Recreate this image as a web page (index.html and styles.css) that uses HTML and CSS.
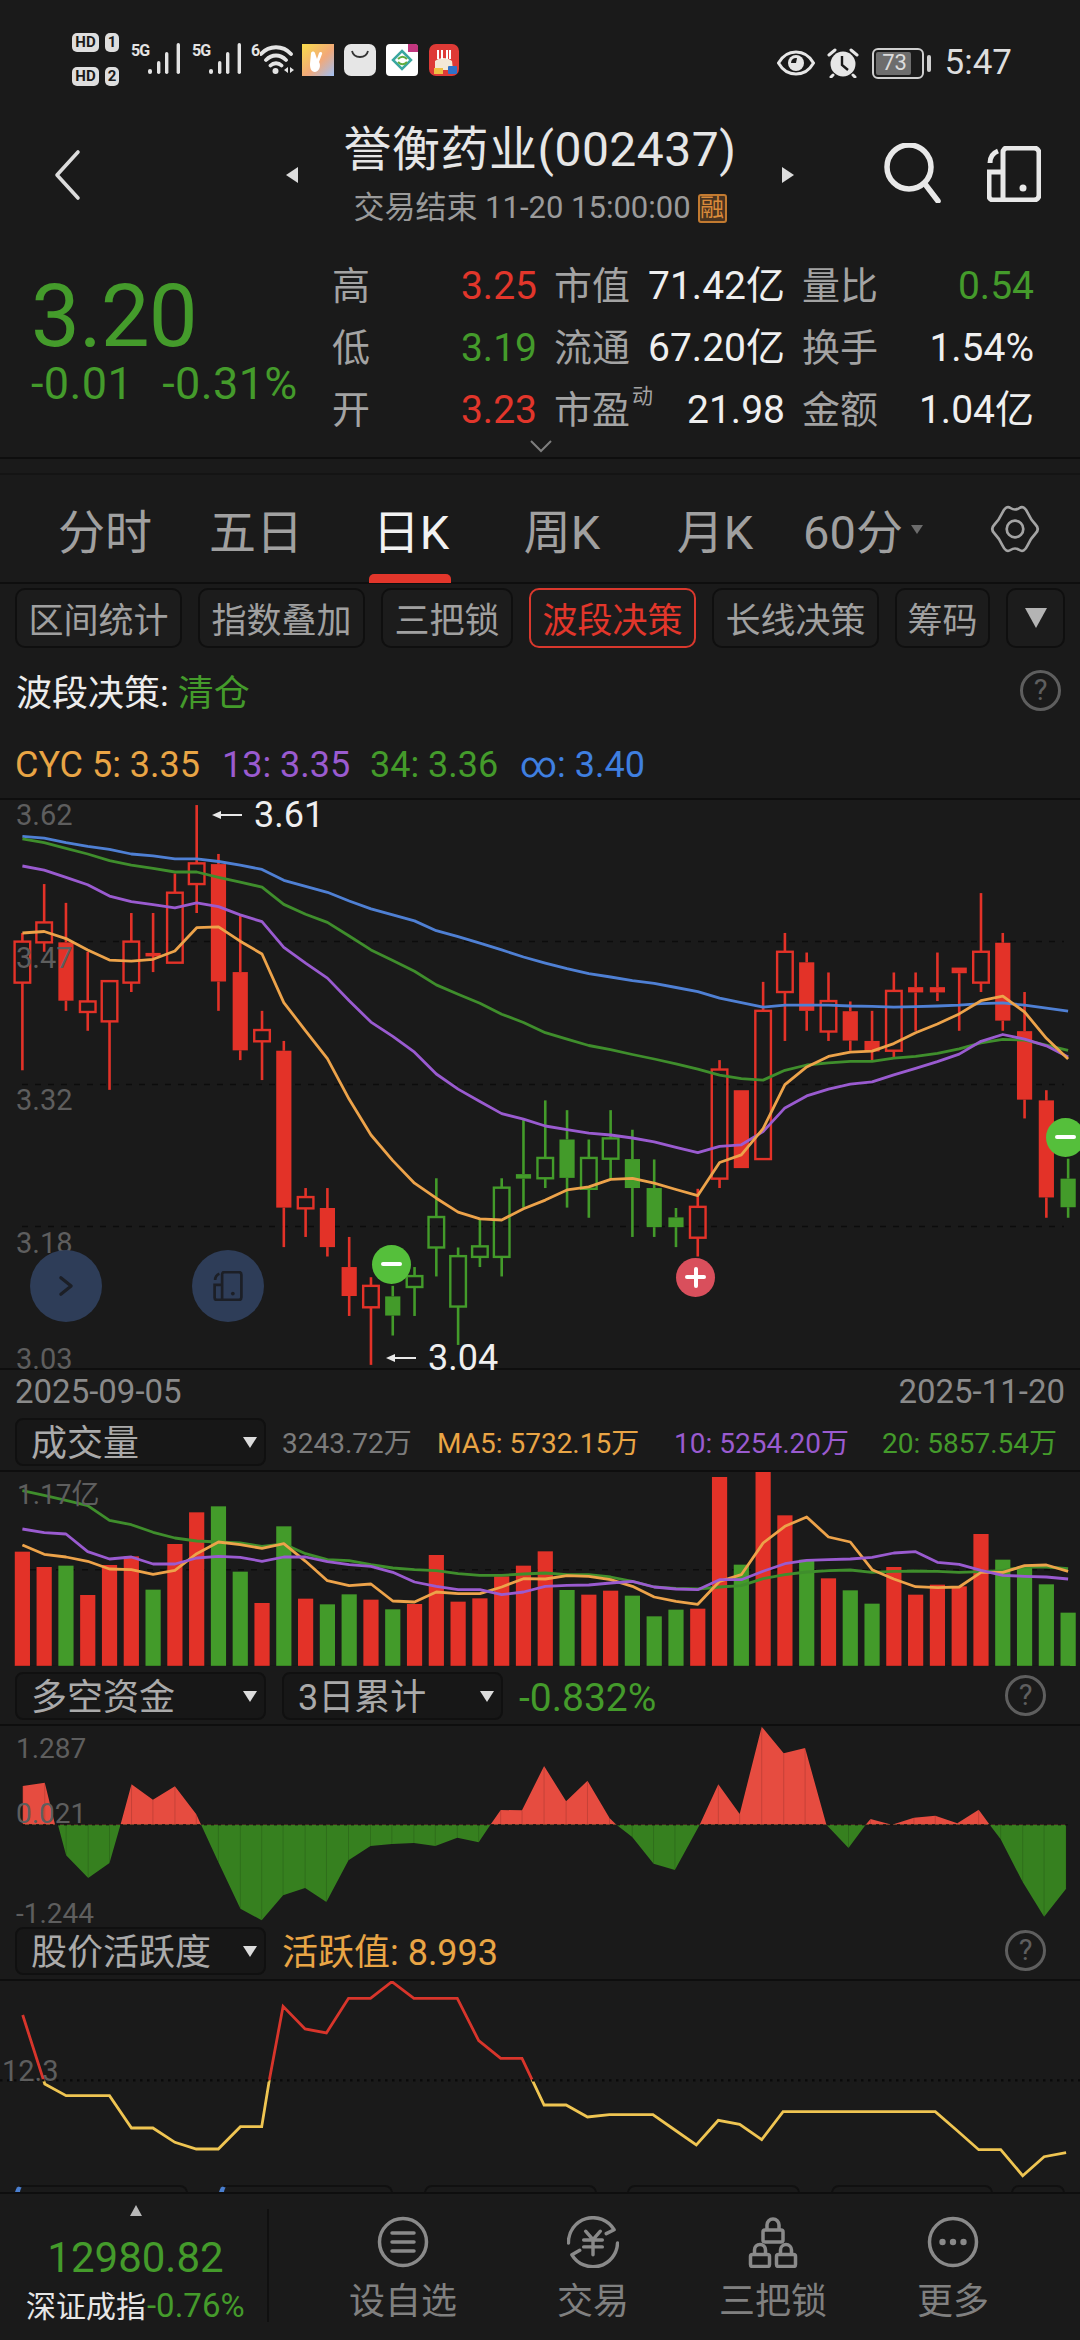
FILE: index.html
```html
<!DOCTYPE html>
<html lang="zh">
<head>
<meta charset="utf-8">
<title>誉衡药业(002437)</title>
<link rel="stylesheet" href="styles.css">
</head>
<body>
<div class="page">

  <div class="status">
    <div class="hd-stack">
      <div class="hd-row"><span class="hd-pill">HD</span><span class="hd-num">1</span></div>
      <div class="hd-row"><span class="hd-pill">HD</span><span class="hd-num">2</span></div>
    </div>
    <div class="sig"><span class="sig-label">5G</span>
      <svg class="sig-bars" viewBox="0 0 32 31"><rect x="0" y="26" width="4" height="5" rx="2"/><rect x="9" y="18" width="3.4" height="13" rx="1.7"/><rect x="17" y="9" width="3.4" height="22" rx="1.7"/><rect x="28.600" y="0" width="3.4" height="31" rx="1.7"/></svg>
    </div>
    <div class="sig"><span class="sig-label">5G</span>
      <svg class="sig-bars" viewBox="0 0 32 31"><rect x="0" y="26" width="4" height="5" rx="2"/><rect x="9" y="18" width="3.4" height="13" rx="1.7"/><rect x="17" y="9" width="3.4" height="22" rx="1.7"/><rect x="28.600" y="0" width="3.4" height="31" rx="1.7"/></svg>
    </div>
    <div class="sig wifi"><span class="sig-label six">6</span>
      <svg class="wifi-icon" viewBox="0 0 36 31"><path d="M1 11C9 2 23 2 31 11M6 17c6-6 14-6 20 0M10.500 22.500c3-3 8-3 11 0" fill="none" stroke="#e4e4e4" stroke-width="3.800" stroke-linecap="round"/><circle cx="15.500" cy="28" r="3" fill="#e4e4e4"/><path d="M28 24v6l-4-3zM30 24v6l4-3z" fill="#e4e4e4"/></svg>
    </div>
    <svg class="app app-first" viewBox="0 0 32 32"><defs><linearGradient id="g1" x1="0" y1="0" x2="1" y2="1"><stop offset="0" stop-color="#f8dc4a"/><stop offset=".55" stop-color="#f2a979"/><stop offset="1" stop-color="#9fc0f5"/></linearGradient></defs><rect width="32" height="32" fill="url(#g1)"/><path d="M9 9c1-2 3-2 4 0l2 6 2-6c1-2 4-1 3 1l-3 8c2 3 1 9-4 10-4 0-5-4-5-8z" fill="#fff"/></svg>
    <svg class="app app-gap" viewBox="0 0 32 32"><rect width="32" height="32" rx="7" fill="#e6e6e6"/><path d="M8 7c2 8 14 8 16 0" fill="none" stroke="#333" stroke-width="1.800"/></svg>
    <svg class="app app-gap" viewBox="0 0 32 32"><rect width="32" height="32" rx="4" fill="#fff"/><path d="M22 0h7a3 3 0 0 1 3 3v5h-10z" fill="#c2367f"/><path d="M16 7l9 9-9 9-9-9z" fill="none" stroke="#3aa7a0" stroke-width="2.500"/><path d="M12 15c3-3 6-3 9 0M12 18c3 3 6 3 9 0" fill="none" stroke="#62ad3f" stroke-width="2"/></svg>
    <svg class="app app-gap app-last" viewBox="0 0 30 32"><rect width="30" height="32" rx="7" fill="#de3a36"/><path d="M6 17c5-4 12-4 17 0l1 9H6z" fill="#f3e8d6"/><rect x="19" y="22" width="9" height="8" rx="1" fill="#2f72c9"/><rect x="5" y="24" width="9" height="6" fill="#eec044"/><path d="M9 6v9M13 6v9M18 6v9M21 6v9" stroke="#fff" stroke-width="2"/></svg>

    <div class="status-right">
      <svg class="eye" viewBox="0 0 38 26"><path d="M1.500 13C6 5 12 2 19 2s13 3 17.500 11C32 21 26 24 19 24S6 21 1.500 13z" fill="none" stroke="#e6e6e6" stroke-width="3"/><circle cx="19" cy="13" r="8" fill="#e6e6e6"/><path d="M14 13a5 5 0 0 1 6-5l-1 5z" fill="#1a1a1a"/></svg>
      <svg class="alarm" viewBox="0 0 32 30"><circle cx="16" cy="16" r="12.500" fill="#e6e6e6"/><path d="M15 8v9l6 5" fill="none" stroke="#1a1a1a" stroke-width="2.400"/><path d="M2 7l6-5M30 7l-6-5M6 27l-2 2M26 27l2 2" stroke="#e6e6e6" stroke-width="3" stroke-linecap="round"/></svg>
      <div class="battery"><div class="battery-fill"></div><span class="battery-text">73</span></div>
      <div class="battery-nub"></div>
      <span class="clock">5:47</span>
    </div>
  </div>

  <header class="header">
    <svg class="back" viewBox="0 0 28 52"><path d="M25 3L4 26l21 23" fill="none" stroke="#dcdcdc" stroke-width="3.600" stroke-linecap="round" stroke-linejoin="round"/></svg>
    <div class="tri-left"></div>
    <div class="title-box">
      <div class="title">誉衡药业(002437)</div>
      <div class="subtitle">交易结束 11-20 15:00:00<span class="rong">融</span></div>
    </div>
    <div class="tri-right"></div>
    <svg class="search" viewBox="0 0 60 60"><circle cx="27" cy="24" r="22" fill="none" stroke="#e8e8e8" stroke-width="5.500"/><path d="M43 41l13 17" stroke="#e8e8e8" stroke-width="5.500" stroke-linecap="round"/></svg>
    <svg class="split" viewBox="0 0 54 56"><path d="M15 54H6a4 4 0 0 1-4-4V26h13M16 6a4 4 0 0 1 4-4h27a5 5 0 0 1 5 5v42a5 5 0 0 1-5 5H16z" fill="none" stroke="#e8e8e8" stroke-width="5"/><circle cx="36" cy="42" r="3.500" fill="#e8e8e8"/><path d="M3 17c0-6 3-10 8-12" fill="none" stroke="#e8e8e8" stroke-width="5"/></svg>
  </header>

  <section class="quote">
    <div class="price-col">
      <div class="price">3.20</div>
      <div class="change"><span>-0.01</span><span>-0.31%</span></div>
    </div>
    <div class="stats">
      <div class="stat"><span class="lbl">高</span><span class="red">3.25</span></div>
      <div class="stat"><span class="lbl">市值</span><span class="val">71.42亿</span></div>
      <div class="stat"><span class="lbl">量比</span><span class="green">0.54</span></div>
      <div class="stat"><span class="lbl">低</span><span class="green">3.19</span></div>
      <div class="stat"><span class="lbl">流通</span><span class="val">67.20亿</span></div>
      <div class="stat"><span class="lbl">换手</span><span class="val">1.54%</span></div>
      <div class="stat"><span class="lbl">开</span><span class="red">3.23</span></div>
      <div class="stat"><span class="lbl">市盈<sup class="sup">动</sup></span><span class="val">21.98</span></div>
      <div class="stat"><span class="lbl">金额</span><span class="val">1.04亿</span></div>
    </div>
    <svg class="more-down" viewBox="0 0 22 14"><path d="M1 2l10 10L21 2" fill="none" stroke="#7e7e7e" stroke-width="2"/></svg>
  </section>
  <div class="band"></div>

  <nav class="tabs">
    <div class="tab">分时</div>
    <div class="tab">五日</div>
    <div class="tab tab-active">日K</div>
    <div class="tab">周K</div>
    <div class="tab">月K</div>
    <div class="tab">60分</div>
    <div class="tab-caret"></div>
    <svg class="gear" viewBox="-1 -1 50 50"><path d="M28.500 3Q33 0 36.500 7.500Q40 15 44.500 19.500Q49 24 44.500 28.500Q40 33 36.500 40.500Q33 48 28.500 45Q24 42 19.500 45Q15 48 11.500 40.500Q8 33 3.500 28.500Q-1 24 3.500 19.500Q8 15 11.500 7.500Q15 0 19.500 3Q24 6 28.500 3z" fill="none" stroke="#a4a4a4" stroke-width="2.700" stroke-linejoin="round"/><circle cx="24" cy="24" r="8.300" fill="none" stroke="#a4a4a4" stroke-width="2.700"/></svg>
  </nav>

  <div class="chips">
    <div class="chip chip-4">区间统计</div>
    <div class="chip chip-4">指数叠加</div>
    <div class="chip chip-3">三把锁</div>
    <div class="chip chip-4 chip-on">波段决策</div>
    <div class="chip chip-4">长线决策</div>
    <div class="chip chip-2">筹码</div>
    <div class="chip chip-1"><span class="chip-tri"></span></div>
  </div>

  <div class="decision">
    <span class="decision-text">波段决策: <span class="green">清仓</span></span>
    <span class="help">?</span>
  </div>

  <div class="cyc">
    <span class="c-orange">CYC 5: 3.35</span>
    <span class="c-purple">13: 3.35</span>
    <span class="c-green">34: 3.36</span>
    <span class="c-blue">∞: 3.40</span>
  </div>

  <section class="candle-pane">
    <svg id="candles" class="chart" width="1080" height="570"></svg>
    <span class="axis ax-a">3.62</span>
    <span class="axis ax-b">3.47</span>
    <span class="axis ax-c">3.32</span>
    <span class="axis ax-d">3.18</span>
    <span class="axis ax-e">3.03</span>
    <div class="hilo hilo-hi"><svg class="arrow" viewBox="0 0 30 10"><path d="M0 5l9-4v3h21v2H9v3z" fill="#e8e8e8"/></svg><span>3.61</span></div>
    <div class="hilo hilo-lo"><svg class="arrow" viewBox="0 0 30 10"><path d="M0 5l9-4v3h21v2H9v3z" fill="#e8e8e8"/></svg><span>3.04</span></div>
    <div class="fab fab-a"><svg class="fab-icon" viewBox="0 0 28 32"><path d="M6 3l16 13L6 29" fill="none" stroke="#1c1f26" stroke-width="5" stroke-linecap="round" stroke-linejoin="round"/></svg></div>
    <div class="fab fab-b"><svg class="fab-icon2" viewBox="0 0 54 56"><path d="M15 54H6a4 4 0 0 1-4-4V26h13M16 6a4 4 0 0 1 4-4h27a5 5 0 0 1 5 5v42a5 5 0 0 1-5 5H16z" fill="none" stroke="#1c1f26" stroke-width="5"/><circle cx="36" cy="42" r="3.500" fill="#1c1f26"/><path d="M3 17c0-6 3-10 8-12" fill="none" stroke="#1c1f26" stroke-width="5"/></svg></div>
    <div class="mark mark-minus mark-a"></div>
    <div class="mark mark-minus mark-c"></div>
    <div class="mark mark-plus mark-b"></div>
  </section>

  <div class="dates"><span>2025-09-05</span><span>2025-11-20</span></div>

  <div class="ind-head vol-head">
    <div class="select select-wide"><span>成交量</span><i class="select-tri"></i></div>
    <span class="vol-val">3243.72万</span>
    <span class="c-orange vol-a">MA5: 5732.15万</span>
    <span class="c-purple vol-b">10: 5254.20万</span>
    <span class="c-green vol-c">20: 5857.54万</span>
  </div>
  <section class="vol-pane">
    <svg id="volume" class="chart" width="1080" height="194"></svg>
    <span class="axis ax-vol">1.17亿</span>
  </section>

  <div class="ind-head money-head">
    <div class="select select-wide"><span>多空资金</span><i class="select-tri"></i></div>
    <div class="select select-mid"><span>3日累计</span><i class="select-tri"></i></div>
    <span class="ind-val c-green">-0.832%</span>
    <span class="help help-r">?</span>
  </div>
  <section class="money-pane">
    <svg id="money" class="chart" width="1080" height="195"></svg>
    <span class="axis ax-m1">1.287</span>
    <span class="axis ax-m2">0.021</span>
    <span class="axis ax-m3">-1.244</span>
  </section>

  <div class="ind-head act-head">
    <div class="select select-wide"><span>股价活跃度</span><i class="select-tri"></i></div>
    <span class="ind-val c-orange">活跃值: 8.993</span>
    <span class="help help-r">?</span>
  </div>
  <section class="act-pane">
    <svg id="activity" class="chart" width="1080" height="214"></svg>
    <span class="axis ax-act">12.3</span>
    <div class="peek"><i class="peek-tab peek-a"></i><i class="peek-tab peek-b"></i><i class="peek-tab peek-c"></i><i class="peek-tab peek-d"></i><i class="peek-tab peek-e"></i><i class="peek-tab peek-f"></i></div>
  </section>

  <footer class="bottom">
    <div class="index">
      <div class="index-caret"></div>
      <div class="index-num">12980.82</div>
      <div class="index-row"><span class="index-name">深证成指</span><span class="green index-pct">-0.76%</span></div>
    </div>
    <div class="nav">
      <div class="nav-item">
        <svg class="nav-icon" viewBox="0 0 52 52"><circle cx="26" cy="26" r="23.500" fill="none" stroke="#8a8a8a" stroke-width="3.500"/><path d="M15 17h22M15 26h22M15 35h22" stroke="#8a8a8a" stroke-width="3.500" stroke-linecap="round"/></svg>
        <span>设自选</span>
      </div>
      <div class="nav-item">
        <svg class="nav-icon" viewBox="0 0 53 52"><path d="M1.500 27A25 25 0 0 1 48 13.500L40 17.500M51.500 27A25 25 0 0 1 5 39L13 34.500" fill="none" stroke="#8a8a8a" stroke-width="3.500" stroke-linecap="round" stroke-linejoin="round"/><path d="M19 15l7.500 8.500L34 15M17 24h19M17 31h19M26.500 24v15" fill="none" stroke="#8a8a8a" stroke-width="3.500" stroke-linecap="round" stroke-linejoin="round"/></svg>
        <span>交易</span>
      </div>
      <div class="nav-item">
        <svg class="nav-icon" viewBox="0 0 52 52"><g fill="none" stroke="#8a8a8a" stroke-width="3.500" stroke-linejoin="round"><rect x="16" y="14" width="20" height="12" rx="2"/><path d="M20 14V9a6 6 0 0 1 12 0v5"/><rect x="3.500" y="38.500" width="19" height="12" rx="2"/><path d="M7.500 38.500V34a5.500 5.500 0 0 1 11 0v4.500"/><rect x="29.500" y="38.500" width="19" height="12" rx="2"/><path d="M33.500 38.500V34a5.500 5.500 0 0 1 11 0v4.500"/></g></svg>
        <span>三把锁</span>
      </div>
      <div class="nav-item">
        <svg class="nav-icon" viewBox="0 0 52 52"><circle cx="26" cy="26" r="23.500" fill="none" stroke="#8a8a8a" stroke-width="3.500"/><circle cx="15.500" cy="26" r="3.200" fill="#8a8a8a"/><circle cx="26" cy="26" r="3.200" fill="#8a8a8a"/><circle cx="36.500" cy="26" r="3.200" fill="#8a8a8a"/></svg>
        <span>更多</span>
      </div>
    </div>
  </footer>
</div>
<script src="charts.js"></script>
</body>
</html>
```

FILE: styles.css
```css
* { box-sizing: border-box; }
html, body { margin: 0; padding: 0; background: #1a1a1a; }
body { font-family: Roboto, "Noto Sans CJK SC", sans-serif; color: #e8e8e8; }
.page { width: 1080px; height: 2340px; overflow: hidden; position: relative; background: #1a1a1a; }
.red { color: #e2362b; }
.green { color: #449b2b; }
.c-orange { color: #e9a545; }
.c-purple { color: #9a5bd0; }
.c-green { color: #449b2b; }
.c-blue { color: #3f7fe0; }

/* status bar */
.status { height: 100px; display: flex; align-items: flex-start; padding: 33px 68px 0 72px; }
.hd-stack { display: flex; flex-direction: column; gap: 15px; width: 59px; }
.hd-row { display: flex; gap: 6px; }
.hd-pill, .hd-num { height: 19px; background: #dedede; color: #1a1a1a; border-radius: 5px; font-size: 15px; font-weight: 700; line-height: 19px; text-align: center; }
.hd-pill { width: 27px; }
.hd-num { width: 14px; }
.sig { display: flex; align-items: flex-start; margin-top: 10px; }
.sig-label { font-size: 16px; font-weight: 700; line-height: 16px; letter-spacing: -1px; color: #e4e4e4; width: 17px; }
.sig-bars { width: 32px; height: 31px; fill: #e4e4e4; margin-right: 12px; }
.six { width: 9px; letter-spacing: 0; }
.wifi { margin-left: -2px; }
.wifi-icon { width: 36px; height: 31px; }
.app { width: 32px; height: 32px; margin-top: 11px; flex: none; }
.app-first { margin-left: 6px; }
.app-gap { margin-left: 10px; }
.app-last { width: 30px; margin-left: 11px; }
.status-right { margin-left: auto; display: flex; align-items: center; height: 42px; margin-top: 9px; }
.eye { width: 38px; height: 26px; }
.alarm { width: 32px; height: 30px; margin-left: 12px; }
.battery { position: relative; width: 52px; height: 31px; margin-left: 13px; border: 2.5px solid #cfcfcf; border-radius: 6px; }
.battery-fill { position: absolute; left: 2px; top: 2px; bottom: 2px; width: 35px; background: #6d6d6d; border-radius: 2px; }
.battery-text { position: absolute; inset: 0; font-size: 22px; line-height: 26px; text-align: center; color: #dcdcdc; padding-right: 6px; }
.battery-nub { width: 4px; height: 17px; background: #cfcfcf; border-radius: 2px; margin-left: 3px; }
.clock { font-size: 35px; line-height: 42px; color: #dedede; margin-left: 14px; }

/* header */
.header { height: 140px; display: flex; align-items: flex-start; position: relative; padding-left: 53px; }
.back { width: 28px; height: 52px; margin-top: 49px; flex: none; }
.tri-left { margin-left: 205px; margin-top: 67px; width: 0; height: 0; border-top: 8px solid transparent; border-bottom: 8px solid transparent; border-right: 12px solid #dcdcdc; }
.tri-right { margin-top: 67px; width: 0; height: 0; border-top: 8px solid transparent; border-bottom: 8px solid transparent; border-left: 12px solid #dcdcdc; }
.title-box { width: 484px; display: flex; flex-direction: column; align-items: center; }
.title { font-size: 48px; line-height: 56px; margin-top: 22px; color: #e6e6e6; letter-spacing: 0.5px; white-space: nowrap; }
.subtitle { font-size: 31px; line-height: 32px; margin-top: 14px; color: #9a9a9a; white-space: nowrap; display: flex; align-items: center; }
.rong { width: 29px; height: 29px; margin-left: 7px; border: 2px solid #c27a30; background: #4a3420; border-radius: 3px; color: #d98a3a; font-size: 24px; line-height: 25px; text-align: center; }
.search { width: 60px; height: 60px; margin-left: 88px; margin-top: 43px; flex: none; }
.split { width: 54px; height: 56px; margin-left: 45px; margin-top: 46px; flex: none; }

/* quote */
.quote { height: 219px; display: flex; position: relative; border-bottom: 2px solid #0e0e0e; }
.price-col { width: 332px; padding-left: 31px; }
.price { font-size: 87px; line-height: 86px; color: #449b2b; margin-top: 33px; letter-spacing: -1px; }
.change { display: flex; gap: 29px; font-size: 45px; line-height: 46px; letter-spacing: 0.4px; color: #449b2b; margin-top: 2px; white-space: nowrap; }
.stats { display: grid; grid-template-columns: 205px 231px 232px; grid-auto-rows: 62.300px; column-gap: 17px; padding-top: 14.500px; font-size: 39px; line-height: 62px; }
.stat { display: flex; justify-content: space-between; white-space: nowrap; }
.lbl { color: #a3a3a3; font-size: 38px; position: relative; }
.val { color: #efefef; }
.sup { position: absolute; font-size: 21px; line-height: 21px; top: 7px; margin-left: 2px; }
.more-down { position: absolute; left: 530px; top: 199px; width: 22px; height: 14px; }
.band { height: 16px; border-bottom: 2px solid #141414; }

/* tabs */
.tabs { height: 109px; display: grid; grid-template-columns: 150px 152px 158px 144px 162px 114px 36px auto; padding-left: 30px; border-bottom: 2px solid #0e0e0e; position: relative; }
.tab { font-size: 47px; line-height: 60px; padding-top: 28px; text-align: center; color: #a0a0a0; white-space: nowrap; }
.tab-active { color: #f2f2f2; position: relative; height: 107px; }
.tab-active::after { content: ""; position: absolute; left: 37px; top: 99px; width: 82px; height: 9px; border-radius: 5px 5px 0 0; background: #e2362b; }
.tab-caret { margin-top: 50px; margin-left: 1px; width: 0; height: 0; border-left: 6px solid transparent; border-right: 6px solid transparent; border-top: 9px solid #6c6c6c; }
.gear { width: 50px; height: 50px; margin-top: 29px; margin-left: 44px; }

/* chips */
.chips { display: flex; gap: 16px; padding: 4px 0 0 15px; height: 67px; }
.chip { height: 60px; border: 2px solid #0f0f0f; border-radius: 10px; background: #1c1c1c; color: #a0a0a0; font-size: 35px; line-height: 54px; padding-top: 5px; text-align: center; white-space: nowrap; flex: none; }
.chip-4 { width: 167px; }
.chip-3 { width: 132px; }
.chip-2 { width: 95px; }
.chip-1 { width: 59px; display: flex; align-items: center; justify-content: center; padding-top: 0; }
.chip-on { border-color: #d9382d; color: #e2362b; }
.chip-tri { width: 0; height: 0; border-left: 11px solid transparent; border-right: 11px solid transparent; border-top: 20px solid #b4b4b4; }

.decision { height: 78px; display: flex; align-items: center; justify-content: space-between; padding: 0 19px 0 16px; }
.decision-text { font-size: 36px; color: #ececec; }
.help { width: 41px; height: 41px; border: 3px solid #5e5e5e; border-radius: 50%; color: #5e5e5e; font-size: 29px; line-height: 35px; text-align: center; flex: none; }
.help-r { position: absolute; left: 1005px; top: 9px; }

.cyc { height: 71px; border-bottom: 2px solid #0e0e0e; display: flex; font-size: 36px; line-height: 44px; padding: 14px 0 0 15px; white-space: nowrap; }
.cyc span { flex: none; }
.cyc span:nth-child(1) { width: 207px; }
.cyc span:nth-child(2) { width: 148px; }
.cyc span:nth-child(3) { width: 150px; }

/* charts */
.chart { display: block; position: absolute; left: 0; top: 0; }
.candle-pane { height: 570px; position: relative; border-bottom: 2px solid #0e0e0e; }
.axis { position: absolute; left: 16px; font-size: 29px; line-height: 29px; color: #5e5e5e; white-space: nowrap; }
.ax-a { top: 1px; }
.ax-b { top: 144px; }
.ax-c { top: 286px; }
.ax-d { top: 429px; }
.ax-e { top: 545px; }
.hilo { position: absolute; display: flex; align-items: center; gap: 12px; font-size: 36px; line-height: 36px; color: #efefef; }
.hilo-hi { left: 212px; top: -3px; }
.hilo-lo { left: 386px; top: 540px; }
.arrow { width: 30px; height: 10px; }
.fab { position: absolute; top: 450px; width: 72px; height: 72px; border-radius: 50%; background: #2e3d58; display: flex; align-items: center; justify-content: center; }
.fab-a { left: 30px; }
.fab-b { left: 192px; }
.fab-icon { width: 18px; height: 26px; }
.fab-icon2 { width: 32px; height: 30px; }
.mark { position: absolute; width: 39px; height: 39px; border-radius: 50%; }
.mark::before { content: ""; position: absolute; left: 9px; top: 17px; width: 21px; height: 4px; background: #fff; border-radius: 2px; }
.mark-minus { background: #55bf3b; }
.mark-plus { background: #d94f5c; }
.mark-plus::after { content: ""; position: absolute; left: 17.500px; top: 9px; width: 4px; height: 21px; background: #fff; border-radius: 2px; }
.mark-a { left: 372px; top: 445px; }
.mark-b { left: 676px; top: 458px; }
.mark-c { left: 1046px; top: 318px; }

.dates { height: 48px; display: flex; justify-content: space-between; padding: 5px 15px 0; font-size: 33px; line-height: 34px; color: #8a8a8a; }

.ind-head { display: flex; align-items: flex-start; white-space: nowrap; position: relative; }
.vol-head { height: 54px; border-bottom: 2px solid #0e0e0e; padding-left: 15px; }
.money-head { height: 60px; padding: 6px 0 0 15px; border-bottom: 2px solid #0e0e0e; }
.act-head { height: 60px; padding: 6px 0 0 15px; border-bottom: 2px solid #0e0e0e; }
.select { height: 48px; border: 2px solid #101010; border-radius: 8px; background: #171717; color: #aaa; font-size: 36px; line-height: 48px; padding-left: 14px; position: relative; flex: none; }
.select-wide { width: 251px; }
.select-mid { width: 221px; margin-left: 16px; }
.select-tri { position: absolute; right: 7px; top: 17px; width: 0; height: 0; border-left: 7px solid transparent; border-right: 7px solid transparent; border-top: 11px solid #dcdcdc; }
.vol-val { font-size: 28px; line-height: 52px; color: #7c7c7c; margin-left: 16px; width: 155px; }
.vol-a, .vol-b, .vol-c { font-size: 28px; line-height: 52px; }
.vol-a { width: 237px; }
.vol-b { width: 208px; }
.ind-val { font-size: 39px; line-height: 53px; margin-left: 16px; }
.act-head .ind-val { font-size: 36px; }

.vol-pane { height: 194px; position: relative; }
.ax-vol { top: 8px; left: 17px; font-size: 28px; }
.money-pane { height: 195px; position: relative; border-bottom: 0; }
.ax-m1 { top: 8px; font-size: 28px; }
.ax-m2 { top: 73px; font-size: 28px; }
.ax-m3 { top: 173px; font-size: 28px; }
.act-pane { height: 213px; position: relative; overflow: hidden; border-bottom: 2px solid #0e0e0e; }
.ax-act { top: 76px; left: 2px; }
.peek { position: absolute; left: 0; top: 204px; width: 1080px; height: 8px; display: block; }
.peek-tab { position: absolute; top: 0; height: 20px; border: 2px solid #101010; border-radius: 8px; }
.peek-a, .peek-b { border-left: 5px solid #4a7fd0; }
.peek-a { left: 15px; width: 173px; }
.peek-b { left: 219px; width: 174px; }
.peek-c { left: 424px; width: 173px; }
.peek-d { left: 627px; width: 173px; }
.peek-e { left: 831px; width: 162px; }
.peek-f { left: 1011px; width: 54px; }

/* bottom bar */
.bottom { height: 144px; display: flex; padding-top: 15px; }
.index { width: 269px; height: 113px; border-right: 2px solid #101010; position: relative; text-align: center; padding-left: 4px; }
.index-caret { width: 0; height: 0; margin: -4px auto 0; border-left: 6px solid transparent; border-right: 6px solid transparent; border-bottom: 11px solid #b8b8b8; }
.index-num { font-size: 42px; line-height: 48px; color: #449b2b; margin-top: 18px; }
.index-row { display: flex; align-items: baseline; margin-top: 4px; padding-left: 22px; font-size: 30px; line-height: 40px; white-space: nowrap; }
.index-name { color: #e6e6e6; }
.index-pct { font-size: 33px; margin-left: 1px; }
.nav { flex: 1; position: relative; display: grid; grid-template-columns: 190px 190px 170px 190px; padding-left: 39px; }
.nav-item { display: flex; flex-direction: column; align-items: center; color: #808080; font-size: 36px; line-height: 44px; white-space: nowrap; }
.nav-item span { margin-top: 12px; }
.nav-icon { width: 52px; height: 52px; margin-top: 7px; }
```

FILE: charts.js
```js
// Chart data is kept in reference sampling units and scaled to pixels below.
var NS = 'http://www.w3.org/2000/svg';
var RED = '#e33228', GREEN = '#439b2a';
var STEP = 63.3, X0 = 65;
var LINE = 2.8;

function add(svg, tag, attrs) {
  var e = document.createElementNS(NS, tag);
  for (var k in attrs) e.setAttribute(k, attrs[k]);
  svg.appendChild(e);
  return e;
}
function cx(i) { return (X0 + i * STEP * 0.9995) / 2.904; }

/* ------ candle chart ------ */
var C = [
 [380,745,403,512,'r'],[250,430,352,405,'r'],[300,587,405,560,'R'],[430,640,562,590,'r'],[507,797,508,615,'r'],
 [327,537,403,512,'r'],[327,484,433,440,'R'],[222,460,273,459,'r'],[40,327,195,250,'r'],[170,587,197,509,'R'],
 [335,718,484,692,'R'],[587,771,638,668,'r'],[667,1215,693,1110,'R'],[1058,1188,1082,1112,'r'],[1058,1240,1111,1215,'R'],
 [1188,1398,1268,1345,'R'],[1295,1528,1318,1375,'r'],[1318,1450,1346,1397,'G'],[1268,1398,1292,1321,'g'],[1032,1293,1135,1216,'g'],
 [1216,1475,1239,1373,'g'],[1140,1268,1213,1241,'g'],[1032,1293,1057,1241,'g'],[875,1110,1021,1033,'G'],[825,1058,978,1032,'g'],
 [851,1110,929,1031,'G'],[929,1137,978,1060,'g'],[851,1033,926,980,'g'],[903,1188,981,1058,'G'],[982,1188,1058,1162,'G'],
 [1111,1215,1136,1162,'G'],[1060,1240,1108,1190,'r'],[718,1058,743,1033,'r'],[798,1005,798,1005,'R'],[510,980,587,981,'r'],
 [380,667,430,537,'r'],[432,640,458,587,'R'],[485,667,561,642,'r'],[562,693,588,666,'R'],[587,718,667,695,'R'],
 [485,710,534,693,'r'],[485,640,524,538,'R'],[432,561,524,538,'R'],[472,640,472,487,'R'],[274,537,430,512,'r'],
 [380,640,406,613,'R'],[537,873,641,823,'R'],[798,1137,825,1083,'R'],[980,1137,1033,1109,'G']
];
var BLUE = [123,128,140,150,158,170,175,183,183,190,200,211,240,256,272,295,316,332,348,374,390,407,425,444,460,475,488,497,507,514,525,536,553,565,577,572,572,572,574,575,577,576,574,572,568,566,572,580,588];
var LGREEN = [130,140,155,170,188,200,208,218,218,232,245,258,304,330,352,388,425,453,482,518,543,567,596,618,645,662,679,690,703,715,728,742,758,767,771,745,731,725,721,721,713,708,700,688,672,663,665,678,692];
var PURPLE = [202,213,232,252,282,297,305,313,300,310,332,350,418,460,500,560,617,655,697,755,795,828,860,875,893,903,912,917,925,935,950,964,947,943,908,845,813,795,782,776,757,740,722,702,668,650,662,680,710];
var ORANGE = [380,376,395,425,452,455,450,428,366,364,402,436,565,640,714,822,917,985,1045,1085,1122,1140,1143,1113,1090,1063,1055,1035,1032,1045,1062,1078,990,970,900,783,736,708,697,694,674,645,622,595,560,548,590,660,715];

function cy(z) { return z / 2.658 - 10; }

(function () {
  var svg = document.getElementById('candles');
  [403, 783, 1160].forEach(function (z) {
    add(svg, 'line', { x1: 22, x2: 1064, y1: cy(z), y2: cy(z), stroke: '#0c0c0c', 'stroke-width': 1.5, 'stroke-dasharray': '6 7' });
  });
  C.forEach(function (c, i) {
    var x = cx(i), col = (c[4] === 'r' || c[4] === 'R') ? RED : GREEN;
    var hollow = c[4] === 'r' || c[4] === 'g';
    if (c[2] > c[0]) add(svg, 'line', { x1: x, x2: x, y1: cy(c[0]), y2: cy(c[2]), stroke: col, 'stroke-width': 2.6 });
    if (c[1] > c[3]) add(svg, 'line', { x1: x, x2: x, y1: cy(c[3]), y2: cy(c[1]), stroke: col, 'stroke-width': 2.6 });
    if (hollow) {
      add(svg, 'rect', { x: x - 7.8, y: cy(c[2]), width: 15.6, height: cy(c[3]) - cy(c[2]), fill: 'none', stroke: col, 'stroke-width': 2.4 });
    } else if (c[4] === 'R' && i === 33) {
      add(svg, 'rect', { x: x - 7.6, y: cy(798), width: 15.2, height: cy(1005) - cy(798), fill: col });
    } else {
      add(svg, 'rect', { x: x - 7.6, y: cy(c[2]), width: 15.2, height: Math.max(cy(c[3]) - cy(c[2]), 3.5), fill: col });
    }
  });
  var lines = [[BLUE, '#4f80d4'], [LGREEN, '#3f8e2c'], [PURPLE, '#9a5bd0'], [ORANGE, '#eda34a']];
  lines.forEach(function (l) {
    add(svg, 'polyline', {
      points: l[0].map(function (z, i) { return cx(i).toFixed(1) + ',' + cy(z).toFixed(1); }).join(' '),
      fill: 'none', stroke: l[1], 'stroke-width': LINE, 'stroke-linejoin': 'round'
    });
  });
})();

/* ------ volume ------ */
var V = [[516,'R'],[562,'R'],[558,'G'],[646,'R'],[556,'R'],[530,'R'],[630,'G'],[493,'R'],[398,'R'],[380,'G'],[576,'G'],[670,'R'],[440,'G'],[657,'R'],[674,'G'],[644,'G'],[660,'R'],[689,'G'],[673,'R'],[526,'R'],[666,'R'],[656,'R'],[590,'R'],[558,'R'],[515,'R'],[631,'G'],[645,'R'],[633,'R'],[648,'G'],[710,'G'],[690,'G'],[687,'R'],[292,'R'],[555,'G'],[276,'R'],[407,'R'],[540,'G'],[596,'R'],[632,'G'],[672,'G'],[562,'R'],[645,'R'],[615,'R'],[620,'R'],[463,'R'],[540,'G'],[565,'G'],[614,'G'],[699,'G']];
var VG = [333,347,362,378,422,435,458,475,484,487,490,500,493,522,540,543,555,565,570,573,582,587,587,583,580,585,585,592,605,622,626,628,622,618,597,585,577,573,571,578,575,574,575,578,576,572,562,562,567];
var VP = [448,459,463,516,538,532,553,553,535,530,533,545,532,532,546,555,560,578,607,620,630,630,645,637,620,617,616,610,605,622,628,630,600,600,575,552,542,540,538,533,520,516,548,554,572,587,590,592,598];
var VO = [496,524,532,545,568,570,584,572,522,487,495,506,492,545,603,618,613,664,667,637,642,642,622,597,598,588,590,600,620,652,665,674,605,585,490,440,412,472,487,570,598,621,624,622,578,578,558,556,575];

(function () {
  var svg = document.getElementById('volume');
  function vy(z) { return (z - 277) / 3; }
  add(svg, 'line', { x1: 30, x2: 1064, y1: vy(570), y2: vy(570), stroke: '#0c0c0c', 'stroke-width': 1.5, 'stroke-dasharray': '6 7' });
  V.forEach(function (v, i) {
    add(svg, 'rect', { x: cx(i) - 7.6, y: vy(v[0]), width: 15.2, height: vy(860) - vy(v[0]), fill: v[1] === 'R' ? RED : GREEN });
  });
  [[VG, '#3f8e2c'], [VO, '#eda34a'], [VP, '#9a5bd0']].forEach(function (l) {
    add(svg, 'polyline', {
      points: l[0].map(function (z, i) { return cx(i).toFixed(1) + ',' + vy(z).toFixed(1); }).join(' '),
      fill: 'none', stroke: l[1], 'stroke-width': LINE, 'stroke-linejoin': 'round'
    });
  });
  add(svg, 'line', { x1: 15, x2: 1070, y1: vy(860), y2: vy(860), stroke: '#0e0e0e', 'stroke-width': 1 });
})();

/* ------ long/short money area ------ */
var M = [[33,352],[65,342],[80,468],[84,468],[96,560],[128,628],[159,583],[175,468],[191,347],[222,393],[254,353],[285,437],[292,468],[317,580],[349,720],[380,755],[411,680],[443,658],[474,700],[506,575],[538,532],[569,526],[601,523],[632,532],[664,507],[695,521],[712,468],[727,424],[758,425],[790,292],[822,398],[853,336],[885,448],[895,468],[918,505],[949,585],[980,604],[1016,468],[1043,347],[1074,436],[1106,174],[1138,254],[1169,238],[1200,468],[1232,538],[1257,468],[1264,451],[1295,468],[1327,447],[1358,441],[1390,464],[1421,423],[1437,468],[1453,512],[1485,640],[1516,744],[1548,660]];

(function () {
  var svg = document.getElementById('money');
  function mx(x) { return x / 1.452; }
  function my(z) { return (z - 172) / 3; }
  var zero = my(468);
  var defs = add(svg, 'defs', {});
  var c1 = add(defs, 'clipPath', { id: 'above' });
  add(c1, 'rect', { x: 0, y: 0, width: 1080, height: zero });
  var c2 = add(defs, 'clipPath', { id: 'below' });
  add(c2, 'rect', { x: 0, y: zero, width: 1080, height: 195 });
  var pts = M.map(function (p) { return mx(p[0]).toFixed(1) + ',' + my(p[1]).toFixed(1); });
  var poly = mx(33).toFixed(1) + ',' + zero + ' ' + pts.join(' ') + ' ' + mx(1548).toFixed(1) + ',' + zero;
  add(svg, 'polygon', { points: poly, fill: '#e64c40', 'clip-path': 'url(#above)' });
  add(svg, 'polygon', { points: poly, fill: '#36801f', 'clip-path': 'url(#below)' });
  M.forEach(function (p) {
    if (p[1] !== 468) add(svg, 'line', { x1: mx(p[0]), x2: mx(p[0]), y1: my(p[1]), y2: zero, stroke: 'rgba(0,0,0,.14)', 'stroke-width': 1 });
  });
  add(svg, 'line', { x1: 22, x2: 1068, y1: zero, y2: zero, stroke: '#0c0c0c', 'stroke-width': 1.5, 'stroke-dasharray': '3 4', opacity: 0.7 });
})();

/* ------ activity line ------ */
var A = [[33,78],[65,285],[96,320],[128,320],[159,320],[191,417],[222,417],[254,460],[285,480],[317,480],[349,413],[380,413],[391,274],[411,52],[443,120],[474,132],[506,28],[538,28],[569,-22],[601,28],[632,28],[664,28],[695,155],[727,208],[758,208],[773,274],[790,348],[822,348],[853,384],[885,377],[916,377],[948,377],[980,423],[1011,468],[1043,394],[1074,406],[1106,452],[1137,368],[1358,368],[1390,425],[1421,482],[1453,482],[1485,560],[1516,503],[1548,491]];

(function () {
  var svg = document.getElementById('activity');
  function ax(x) { return x / 1.452; }
  function ay(z) { return z / 3 + 8; }
  var mid = ay(274);
  var defs = add(svg, 'defs', {});
  var c1 = add(defs, 'clipPath', { id: 'hot' });
  add(c1, 'rect', { x: 0, y: 0, width: 1080, height: mid });
  var c2 = add(defs, 'clipPath', { id: 'cold' });
  add(c2, 'rect', { x: 0, y: mid, width: 1080, height: 214 });
  var pts = A.map(function (p) { return ax(p[0]).toFixed(1) + ',' + ay(p[1]).toFixed(1); }).join(' ');
  add(svg, 'polyline', { points: pts, fill: 'none', stroke: '#d8352b', 'stroke-width': 2.8, 'clip-path': 'url(#hot)' });
  add(svg, 'polyline', { points: pts, fill: 'none', stroke: '#efc552', 'stroke-width': 2.8, 'clip-path': 'url(#cold)' });
  add(svg, 'line', { x1: 0, x2: 1080, y1: mid, y2: mid, stroke: '#0a0a0a', 'stroke-width': 2.2, 'stroke-dasharray': '2.5 4.5' });
})();
```
